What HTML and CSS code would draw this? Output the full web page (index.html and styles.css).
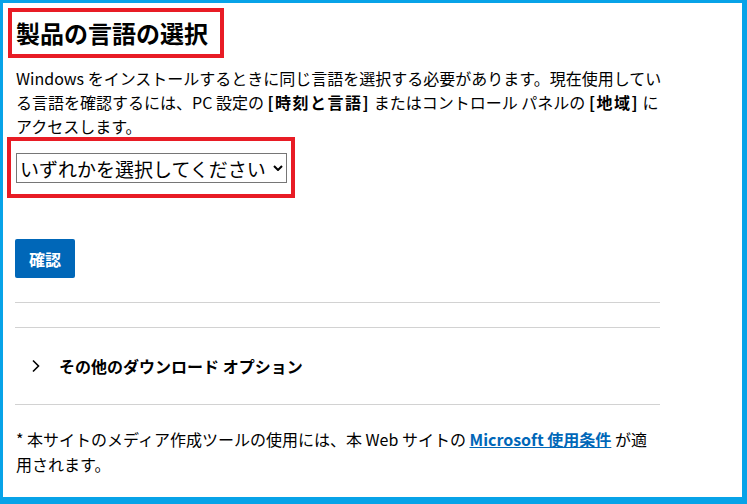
FILE: index.html
```html
<!DOCTYPE html>
<html lang="ja">

<head>
	<meta charset="utf-8">
	<title>製品の言語の選択</title>
	<link rel="stylesheet" href="styles.css">
</head>

<body>
	<div class="frame">
		<div class="content">
			<h1 class="title">製品の言語の選択</h1>
			<p class="intro">Windows をインストールするときに同じ言語を選択する必要があります。現在使用している言語を確認するには、PC 設定の <b>[時刻と言語]</b> またはコントロール パネルの <b>[地域]</b> にアクセスします。</p>

			<div class="select-box">
				<select class="lang-select" id="product-languages">
					<option value="">いずれかを選択してください</option>
				</select>
			</div>

			<button type="button" class="confirm">確認</button>

			<hr class="rule rule-top">

			<div class="more">
				<svg class="chevron" width="10" height="14" viewBox="0 0 10 14">
					<polyline points="2,1.5 7.5,7 2,12.5" fill="none" stroke="#000" stroke-width="1.6"/>
				</svg>
				<span class="more-label">その他のダウンロード オプション</span>
			</div>

			<p class="note">* 本サイトのメディア作成ツールの使用には、本 Web サイトの <a href="#" class="terms">Microsoft 使用条件</a> が適用されます。</p>
		</div>
	</div>
</body>

</html>
```

FILE: styles.css
```css
html,
body {
	margin: 0;
	padding: 0;
}

body {
	font-family: "Noto Sans CJK JP", "Noto Sans", sans-serif;
	color: #000;
	background: #fff;
}

.frame {
	box-sizing: border-box;
	width: 747px;
	height: 504px;
	border-style: solid;
	border-color: #07a3e8;
	border-width: 3px 5px 7px 3px;
	overflow: hidden;
}

.content {
	width: 645px;
	padding: 13px 0 0 12px;
}

.title {
	display: inline-block;
	margin: 0 0 16px 1px;
	padding-right: 8px;
	font-size: 24px;
	line-height: 34px;
	font-weight: bold;
	outline: 4px solid #e81c25;
	outline-offset: 4px;
}

.intro {
	margin: 0 -6px 3px 1px;
	font-size: 16px;
	line-height: 24px;
}

.intro b {
	letter-spacing: 1.5px;
}

.select-box {
	display: inline-block;
	margin-left: -4px;
	padding: 12px 4px 11px 5px;
	outline: 4px solid #e81c25;
}

.lang-select {
	display: block;
	box-sizing: border-box;
	width: 271px;
	height: 30px;
	margin: 0;
	padding: 0 0 0 3px;
	border: 1px solid #767676;
	border-radius: 0;
	background-color: #fff;
	background-image: url("data:image/svg+xml;utf8,<svg xmlns='http://www.w3.org/2000/svg' width='10' height='6' viewBox='0 0 10 6'><polyline points='1,1 5,5 9,1' fill='none' stroke='black' stroke-width='2'/></svg>");
	background-repeat: no-repeat;
	background-position: right 3px center;
	appearance: none;
	-webkit-appearance: none;
	font-family: "Noto Sans CJK JP", sans-serif;
	font-size: 19px;
	color: #000;
}

.confirm {
	display: block;
	width: 60px;
	height: 39px;
	margin: 45px 0 0 0;
	padding: 0;
	border: none;
	border-radius: 2px;
	background-color: #0067b8;
	color: #fff;
	font-family: "Noto Sans CJK JP", sans-serif;
	font-size: 16px;
	font-weight: bold;
	cursor: pointer;
}

.rule {
	margin: 0;
	border: none;
	border-top: 1px solid #d2d2d2;
}

.rule-top {
	margin-top: 24px;
}

.more {
	display: flex;
	align-items: center;
	margin-top: 24px;
	height: 76px;
	border-top: 1px solid #d2d2d2;
	border-bottom: 1px solid #d2d2d2;
}

.chevron {
	margin-left: 16px;
	margin-right: 18px;
}

.more-label {
	font-size: 16px;
	line-height: 24px;
	font-weight: bold;
}

.note {
	margin: 22px 0 0 1px;
	font-size: 16px;
	line-height: 25px;
}

.terms {
	color: #0067b8;
	font-weight: bold;
	text-decoration: underline;
}
```
